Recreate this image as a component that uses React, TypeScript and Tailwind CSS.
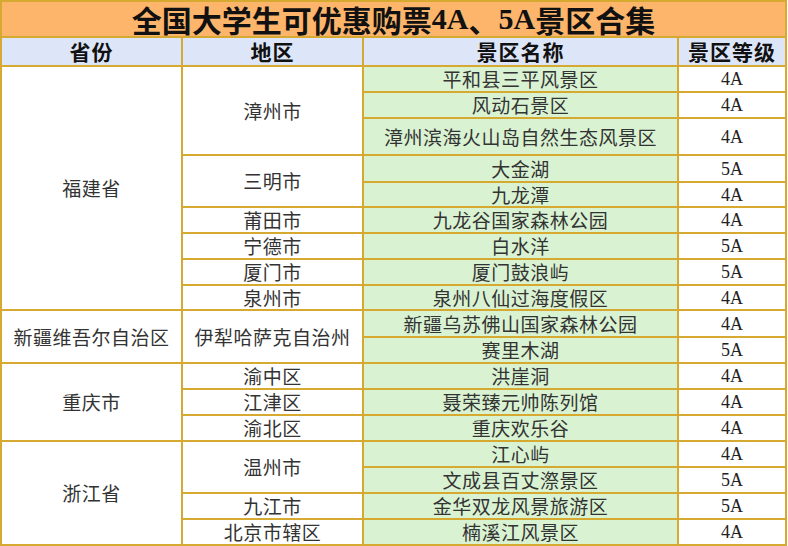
type Spot = { name: string; grade: string };
type Region = { name: string; spots: Spot[] };
type Province = { name: string; regions: Region[] };

const data: Province[] = [
  {
    name: "福建省",
    regions: [
      {
        name: "漳州市",
        spots: [
          { name: "平和县三平风景区", grade: "4A" },
          { name: "风动石景区", grade: "4A" },
          { name: "漳州滨海火山岛自然生态风景区", grade: "4A" },
        ],
      },
      {
        name: "三明市",
        spots: [
          { name: "大金湖", grade: "5A" },
          { name: "九龙潭", grade: "4A" },
        ],
      },
      { name: "莆田市", spots: [{ name: "九龙谷国家森林公园", grade: "4A" }] },
      { name: "宁德市", spots: [{ name: "白水洋", grade: "5A" }] },
      { name: "厦门市", spots: [{ name: "厦门鼓浪屿", grade: "5A" }] },
      { name: "泉州市", spots: [{ name: "泉州八仙过海度假区", grade: "4A" }] },
    ],
  },
  {
    name: "新疆维吾尔自治区",
    regions: [
      {
        name: "伊犁哈萨克自治州",
        spots: [
          { name: "新疆乌苏佛山国家森林公园", grade: "4A" },
          { name: "赛里木湖", grade: "5A" },
        ],
      },
    ],
  },
  {
    name: "重庆市",
    regions: [
      { name: "渝中区", spots: [{ name: "洪崖洞", grade: "4A" }] },
      { name: "江津区", spots: [{ name: "聂荣臻元帅陈列馆", grade: "4A" }] },
      { name: "渝北区", spots: [{ name: "重庆欢乐谷", grade: "4A" }] },
    ],
  },
  {
    name: "浙江省",
    regions: [
      {
        name: "温州市",
        spots: [
          { name: "江心屿", grade: "4A" },
          { name: "文成县百丈漈景区", grade: "5A" },
        ],
      },
      { name: "九江市", spots: [{ name: "金华双龙风景旅游区", grade: "5A" }] },
      { name: "北京市辖区", spots: [{ name: "楠溪江风景区", grade: "4A" }] },
    ],
  },
];

const spanClass: Record<number, string> = {
  1: "row-span-1",
  2: "row-span-2",
  3: "row-span-3",
  4: "row-span-4",
  9: "row-span-9",
};

const countSpots = (p: Province) => p.regions.reduce((n, r) => n + r.spots.length, 0);

function Cell({ children, className = "" }: { children: React.ReactNode; className?: string }) {
  return (
    <div
      className={`flex items-center justify-center font-['Noto_Sans_CJK_SC','Noto_Sans',sans-serif] text-[19px] leading-[22px] tracking-[0.5px] text-[#333] ${className}`}
    >
      {children}
    </div>
  );
}

export default function App() {
  const cells: React.ReactNode[] = [];
  data.forEach((p) => {
    p.regions.forEach((r, ri) => {
      r.spots.forEach((s, si) => {
        if (ri === 0 && si === 0) {
          cells.push(
            <Cell key={p.name} className={`bg-white ${spanClass[countSpots(p)]}`}>
              {p.name}
            </Cell>
          );
        }
        if (si === 0) {
          cells.push(
            <Cell key={p.name + r.name} className={`bg-white ${spanClass[r.spots.length]}`}>
              {r.name}
            </Cell>
          );
        }
        cells.push(
          <Cell key={s.name} className="bg-[#d9f2d2]">
            {s.name}
          </Cell>
        );
        cells.push(
          <div
            key={s.name + "-g"}
            className="flex items-center justify-center bg-white font-['Liberation_Serif','Noto_Sans_CJK_SC',serif] text-[18px] leading-[22px] text-[#222]"
          >
            {s.grade}
          </div>
        );
      });
    });
  });

  return (
    <div className="h-[546px] w-[788px] bg-white">
      <div className="grid w-[787px] grid-cols-[179px_179px_313px_106px] grid-rows-[34px_27px_24px_24px_35px_25px_23px_24px_24px_24px_23px_25px_24px_24px_24px_24px_24px_24px_24px_24px] gap-[2px] bg-[#d6aa30] p-[2px]">
        <div className="col-span-4 flex items-center justify-center bg-[#fdb56c] font-['Noto_Sans_CJK_SC','Noto_Sans',sans-serif] text-[30px] font-bold leading-[34px] text-[#111]">
          全国大学生可优惠购票
          <span className="font-['Liberation_Serif','Noto_Sans_CJK_SC',serif]">4A</span>、
          <span className="font-['Liberation_Serif','Noto_Sans_CJK_SC',serif]">5A</span>景区合集
        </div>
        {["省份", "地区", "景区名称", "景区等级"].map((h) => (
          <div
            key={h}
            className="flex items-center justify-center bg-[#dde6f9] font-['Noto_Sans_CJK_SC','Noto_Sans',sans-serif] text-[21px] font-bold leading-[27px] tracking-[1px] text-[#111]"
          >
            {h}
          </div>
        ))}
        {cells}
      </div>
    </div>
  );
}
